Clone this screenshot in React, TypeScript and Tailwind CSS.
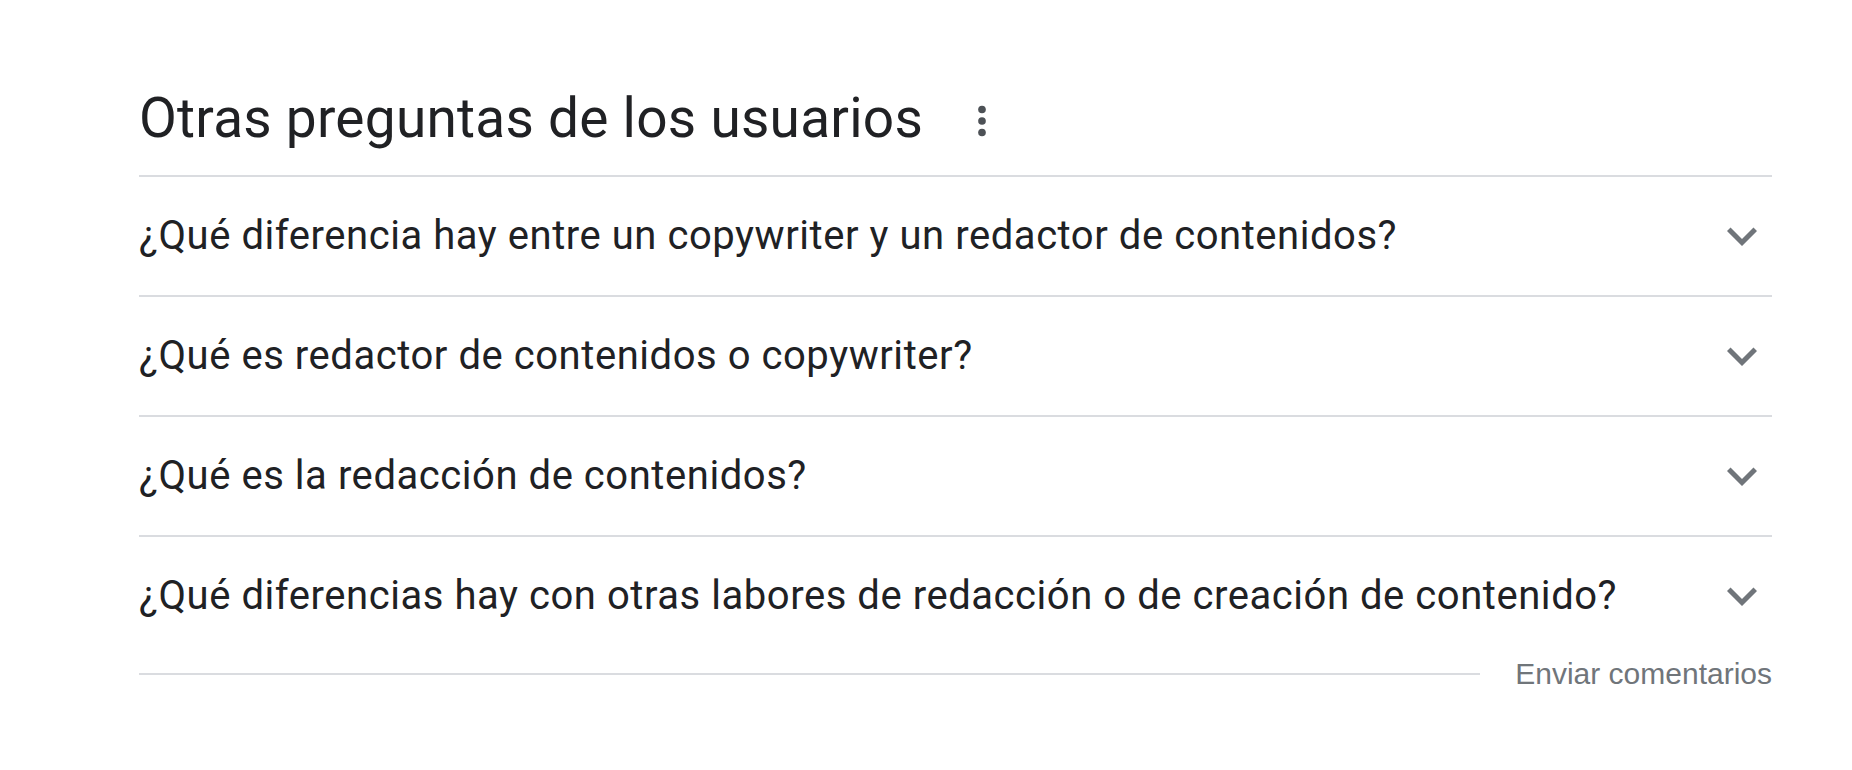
import { ChevronDown } from 'lucide-react';

const questions = [
  '¿Qué diferencia hay entre un copywriter y un redactor de contenidos?',
  '¿Qué es redactor de contenidos o copywriter?',
  '¿Qué es la redacción de contenidos?',
  '¿Qué diferencias hay con otras labores de redacción o de creación de contenido?',
];

function MoreVert() {
  return (
    <svg width="46" height="46" viewBox="0 0 24 24" fill="#4d5156" aria-hidden>
      <circle cx="12" cy="6" r="2" />
      <circle cx="12" cy="12" r="2" />
      <circle cx="12" cy="18" r="2" />
    </svg>
  );
}

function ExpandMore() {
  return (
    <svg width="60" height="60" viewBox="0 0 24 24" fill="#70757a" aria-hidden>
      <path d="M16.59 8.59L12 13.17 7.41 8.59 6 10l6 6 6-6z" />
    </svg>
  );
}

export default function App() {
  return (
    <div className="min-h-screen bg-white pl-[139px] pr-[80px] pt-[86px] font-['Roboto',sans-serif] text-[#202124]">
      <div className="flex h-[64px] items-center">
        <h2 className="text-[55px] leading-[64px] font-normal tracking-[0.25px]">
          Otras preguntas de los usuarios
        </h2>
        <span className="ml-[36px] mt-[6px] flex items-center">
          <MoreVert />
        </span>
      </div>
      <div className="mt-[25px]">
        {questions.map((q) => (
          <div
            key={q}
            className="flex h-[120px] items-center justify-between border-t-2 border-[#dadce0]"
          >
            <span className="text-[40px] leading-[48px] tracking-[0.55px]">{q}</span>
            <ExpandMore />
          </div>
        ))}
      </div>
      <div className="flex h-[38px] items-center gap-[35px]">
        <div className="h-[2px] flex-1 bg-[#dadce0]" />
        <span className="font-['Liberation_Sans',Arial,sans-serif] text-[30px] leading-[36px] text-[#70757a]">
          Enviar comentarios
        </span>
      </div>
    </div>
  );
}
